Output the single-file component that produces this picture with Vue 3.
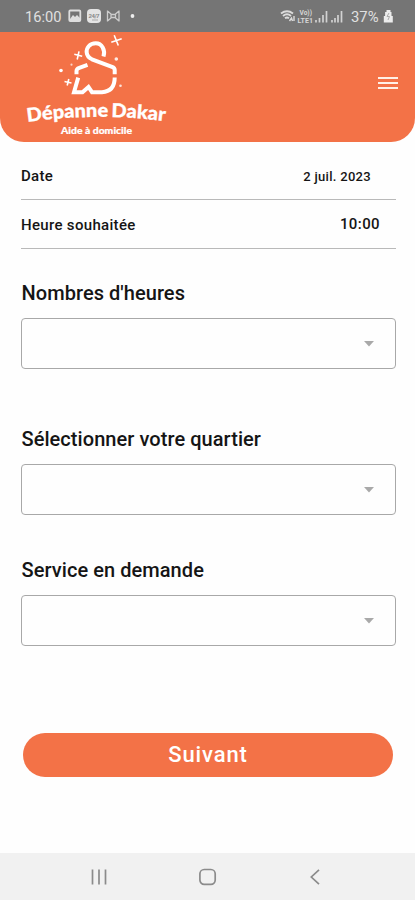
<script setup>
const rows = [
  { label: 'Date', value: '2 juil. 2023', kind: 'date' },
  { label: 'Heure souhaitée', value: '10:00', kind: 'time' },
]
const fields = [
  { label: "Nombres d'heures", kind: 'hours' },
  { label: 'Sélectionner votre quartier', kind: 'district' },
  { label: 'Service en demande', kind: 'service' },
]
</script>

<template>
  <div class="screen">
    <div class="status">
      <span class="clock"><svg width="39" height="20"><text x="0" y="16" textLength="36.500" lengthAdjust="spacingAndGlyphs">16:00</text></svg></span>
      <svg class="notices" width="70" height="20" viewBox="0 0 70 20">
        <rect x="1.300" y="4.500" width="11" height="10.500" rx="1" fill="none" stroke="#dedede" stroke-width="1.800" />
        <path d="M2 13l3-4 2 2 2-2 3 3v2H2z" fill="#dedede" />
        <rect x="19" y="3" width="14" height="14" rx="4" fill="#e4e4e4" />
        <text x="20.500" y="11.500" class="tiny-dark">24/7</text>
        <path d="M24 14h6" stroke="#aaa" />
        <path d="M39.500 4.500v11M51 4.500v11M39.500 5l3.500 3v4l-3.500 3M51 5l-3.500 3v4l3.500 3M43 8.500h4.500M43 11.500h4.500" fill="none" stroke="#cdcdcd" stroke-width="1.300" />
        <circle cx="64.500" cy="10" r="1.900" fill="#ededed" />
      </svg>
      <svg class="signals" width="64" height="20" viewBox="0 0 64 20">
        <path d="M2 7.500q6-4.500 12 0M4 9.900q4-3.300 8 0M6 12.200q2-1.500 4 0" fill="none" stroke="#dcdcdc" stroke-width="1.900" />
        <path d="M10.500 15l2-3 1 3M15 10v5" stroke="#dcdcdc" stroke-width="1.400" fill="none" />
        <text x="20.500" y="8.500" class="tiny" textLength="12.500" lengthAdjust="spacingAndGlyphs">Vo))</text>
        <text x="18.500" y="16.500" class="tiny" textLength="15.500" lengthAdjust="spacingAndGlyphs">LTE1</text>
        <path d="M37 14v2.500M40.500 12v4.500M44 9v7.500M47.500 5v11.500M53 14v2.500M56 12v4.500M59 9v7.500M62.500 5v11.500" stroke="#d2d2d2" stroke-width="1.700" />
      </svg>
      <svg class="charge" width="46" height="20" viewBox="0 0 46 20">
        <text x="0" y="16" textLength="27.500" lengthAdjust="spacingAndGlyphs">37%</text>
        <path d="M35.500 4h4v2h1v4h1.300v6.500h-9V10h1.300V6h1.400z" fill="#ececec" />
        <path d="M38 7l-2 3.500h2.500L37 14" fill="none" stroke="#aaa" />
      </svg>
    </div>

    <header class="header">
      <svg class="logo" width="150" height="108" viewBox="20 32 150 108">
        <g fill="none" stroke="#fff" stroke-width="4">
          <path d="M103.500 56.500C105.500 50 102 43.300 95.800 43.300C89.500 43.300 86.200 48 86.700 52.500C87 55.800 88.700 57.700 92 59.300L112 66.800Q114.700 67.800 114.700 70V74.300" />
          <path d="M87.500 64.800L79.300 67.800Q76.500 68.800 76.500 71V74.300" />
          <path d="M78.200 77.600L74 92.200H82.500L88.500 87L92 92.200H102Q114.700 91.500 114.700 77.600" />
        </g>
        <g stroke="#fff" stroke-width="1.600">
          <path d="M111.300 42.300L121.700 38.700M114.200 35.300L118.300 45.500" />
          <path d="M74.300 54.300L82.200 56.300M79 51.300L77.200 59.500" />
          <path d="M64.500 81.500L71.500 83M68.800 79L67.200 85.500" />
        </g>
        <g fill="#fff">
          <circle cx="61" cy="70.500" r="1.800" />
          <circle cx="116.300" cy="59" r="1.800" opacity=".85" />
          <circle cx="120.500" cy="85.700" r="1.300" opacity=".8" />
          <circle cx="71.500" cy="64.700" r="1.100" opacity=".7" />
        </g>
        <path id="name-arc" d="M27.500 122Q96 112 168 121.500" fill="none" />
        <text class="brand"><textPath href="#name-arc" textLength="138" lengthAdjust="spacingAndGlyphs">Dépanne Dakar</textPath></text>
        <text class="tagline" x="61" y="133.500" textLength="71" lengthAdjust="spacingAndGlyphs">Aide à domicile</text>
      </svg>
      <div class="menu"><i></i><i></i><i></i></div>
    </header>

    <main class="form">
      <div v-for="r in rows" :key="r.kind" class="row" :class="r.kind">
        <span class="label">{{ r.label }}</span>
        <span class="value">{{ r.value }}</span>
      </div>
      <section v-for="f in fields" :key="f.kind" class="field" :class="f.kind">
        <h2>{{ f.label }}</h2>
        <div class="select">
          <svg width="10" height="6" viewBox="0 0 10 6"><path d="M0 0h10L5 5.500z" fill="#a9a9a9" /></svg>
        </div>
      </section>
      <button class="next">Suivant</button>
    </main>

    <nav class="nav">
      <svg width="18" height="18" viewBox="0 0 18 18"><path d="M1.500 1.500v15M8 1.500v15M14.500 1.500v15" stroke="#8b8b8b" stroke-width="1.700" /></svg>
      <svg width="18" height="18" viewBox="0 0 18 18"><rect x=".9" y="1.500" width="15.300" height="14.800" rx="4.300" fill="none" stroke="#8b8b8b" stroke-width="1.700" /></svg>
      <svg width="18" height="18" viewBox="0 0 18 18"><path d="M12 1.800L4.300 9l7.700 7.200" fill="none" stroke="#8b8b8b" stroke-width="1.700" /></svg>
    </nav>
  </div>
</template>

<style>
body { background: #fff; }
</style>

<style scoped>
.screen {
  width: 415px;
  height: 900px;
  display: flex;
  flex-direction: column;
  background: #fefefe;
  font-family: Roboto, "Liberation Sans", sans-serif;
  color: #151515;
  overflow: hidden;
}
svg { display: block; flex: none; }
.status {
  height: 32px;
  box-sizing: border-box;
  padding: 6px 20px 0 25px;
  display: flex;
  background: #757575;
}
.status text { font-size: 15px; fill: #e0e0e0; }
.notices { margin-left: 4px; }
.signals { margin-left: auto; }
.charge { margin-left: 8px; margin-right: -2px; }
.status .tiny { font-size: 6.500px; font-weight: 700; fill: #d6d6d6; }
.status .tiny-dark { font-size: 6px; font-weight: 700; letter-spacing: -.5px; fill: #888; }
.header {
  height: 110px;
  box-sizing: border-box;
  padding: 0 17px 0 20px;
  display: flex;
  justify-content: space-between;
  align-items: flex-start;
  background: #f37247;
  border-radius: 0 0 24px 24px;
}
.brand { font: 900 19px Lato, sans-serif; word-spacing: -1.500px; fill: #fff; stroke: #fff; stroke-width: .3px; }
.tagline { font: 900 9.500px Lato, sans-serif; fill: #fff; stroke: #fff; stroke-width: .2px; }
.menu { width: 20px; padding-top: 45px; display: grid; gap: 3px; }
.menu i { height: 2px; background: #fff0e6; }
.form { height: 711px; padding: 0 19px 0 21px; display: flex; flex-direction: column; }
.row {
  display: flex;
  justify-content: space-between;
  box-sizing: border-box;
  border-bottom: 1px solid #b9b9b9;
  font-weight: 500;
  font-size: 15px;
  line-height: 20px;
}
.date { height: 58px; padding: 24px 25px 0 0; }
.time { height: 49px; padding: 15px 16px 0 0; }
.date .value { font-size: 13px; line-height: 21px; letter-spacing: .3px; }
.label { letter-spacing: .32px; }
.time .value { font-size: 15px; line-height: 18px; letter-spacing: .4px; }
.field h2 { margin: 0 0 14px; padding-left: .5px; font-size: 20px; line-height: 22px; font-weight: 500; letter-spacing: .06px; }
.hours { margin-top: 33px; }
.district { margin-top: 59px; }
.service { margin-top: 44px; }
.select {
  height: 51px;
  box-sizing: border-box;
  border: 1px solid #a8a8a8;
  border-radius: 4px;
  display: flex;
  align-items: center;
  justify-content: flex-end;
  padding-right: 21px;
}
.next {
  margin: 87px 3px 0 2px;
  height: 44px;
  border: 0;
  border-radius: 22px;
  background: #f37247;
  color: #fff;
  font: 500 22px/42px Roboto, "Liberation Sans", sans-serif;
  letter-spacing: .9px;
  padding: 0;
}
.nav {
  height: 47px;
  background: #f1f1f1;
  display: flex;
  align-items: center;
  justify-content: center;
  gap: 90px;
}
</style>
